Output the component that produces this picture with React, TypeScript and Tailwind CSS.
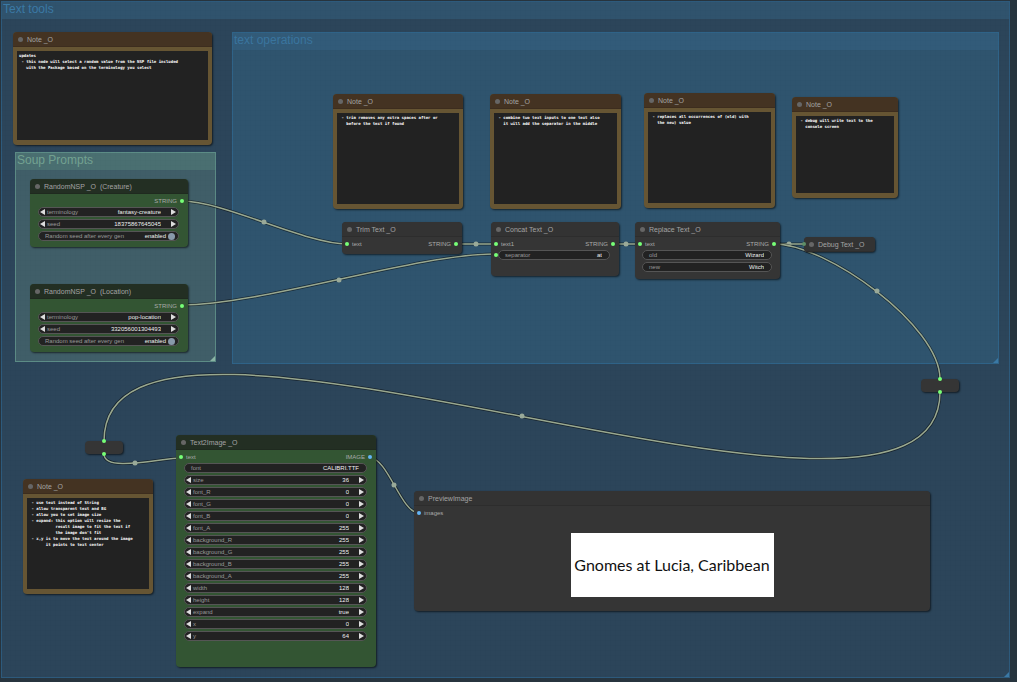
import { useId, useState } from 'react';
import clsx from 'clsx';

const TEXT2IMAGE_FIELDS = [
  { name: 'size', value: '36' },
  { name: 'font_R', value: '0' },
  { name: 'font_G', value: '0' },
  { name: 'font_B', value: '0' },
  { name: 'font_A', value: '255' },
  { name: 'background_R', value: '255' },
  { name: 'background_G', value: '255' },
  { name: 'background_B', value: '255' },
  { name: 'background_A', value: '255' },
  { name: 'width', value: '128' },
  { name: 'height', value: '128' },
  { name: 'expand', value: 'true' },
  { name: 'x', value: '0' },
  { name: 'y', value: '64' },
];

const NOTES = [
  {
    className: 'left-[13px] top-[32px] w-[199px] h-[113px]',
    text: 'updates\n - this node will select a random value from the NSP file included\n   with the Package based on the terminology you select',
  },
  {
    className: 'left-[333px] top-[94px] w-[130px] h-[115px]',
    text: ' - trim removes any extra spaces after or\n   before the text if found',
  },
  {
    className: 'left-[490px] top-[94px] w-[131px] h-[115px]',
    text: ' - combine two text inputs to one text also\n   it will add the separator in the middle',
  },
  {
    className: 'left-[644px] top-[93px] w-[131px] h-[115px]',
    text: ' - replaces all occurrences of (old) with\n   the new) value',
  },
  {
    className: 'left-[792px] top-[97px] w-[106px] h-[101px]',
    text: ' - debug will write text to the\n   console screen',
  },
  {
    className: 'left-[23px] top-[479px] w-[130px] h-[115px]',
    text: " - use text instead of String\n - allow transparent text and BG\n - allow you to set image size\n - expand: this option will resize the\n           result image to fit the text if\n           the image don't fit\n - x,y is to move the text around the image\n       it points to text center",
  },
];

const LINKS = [
  { d: 'M182 201C224 201 305 244 347 244', mid: [264, 222] },
  { d: 'M182 305C261 305 416 254 495 254', mid: [339, 280] },
  { d: 'M456 244L495 244', mid: [476, 244] },
  { d: 'M613 244L640 244', mid: [626, 244] },
  { d: 'M774 244L807 244', mid: [789, 244] },
  { d: 'M774 244C827 244 940 326 940 379', mid: [877, 291] },
  { d: 'M940 392C940 601 104 232 104 441', mid: [522, 416] },
  { d: 'M104 454C104 473 162 458 181 458', mid: [135, 463] },
  { d: 'M370 458C388 458 401 513 419 513', mid: [394, 485] },
];

const Group = ({ title, className, headClass, cornerClass }: any) => (
  <section className={clsx('absolute border', className)}>
    <h2 className={clsx('h-[17px] pl-[1px] text-[12px] leading-[15px]', headClass)}>{title}</h2>
    <span
      className={clsx('absolute right-0 bottom-0 size-[5px] [clip-path:polygon(100%_0,100%_100%,0_100%)]', cornerClass)}
    />
  </section>
);

const Links = () => (
  <svg className="pointer-events-none absolute left-0 top-0" width="1017" height="682" fill="none">
    {LINKS.map((link) => (
      <g key={link.d}>
        <path d={link.d} stroke="#000" strokeOpacity="0.5" strokeWidth="3" />
        <path d={link.d} stroke="#99a88f" strokeWidth="1.5" />
        <circle cx={link.mid[0]} cy={link.mid[1]} r="2.5" fill="#9aaa99" />
      </g>
    ))}
  </svg>
);

const Node = ({ title, className, headClass = 'bg-[#333]', bodyClass = 'bg-[#353535]', children }: any) => (
  <article
    className={clsx(
      'absolute flex flex-col overflow-hidden rounded-[4px] shadow-[1px_1px_2px_rgba(0,0,0,0.6)]',
      bodyClass,
      className
    )}
  >
    <header
      className={clsx('flex h-[15px] shrink-0 items-center gap-[4px] border-b border-black/10 pt-[1px] pl-[5px]', headClass)}
    >
      <span className="size-[5px] rounded-full bg-[#666]" />
      <h3 className="text-[7px] leading-[13px] whitespace-pre text-[#a3a3a3]">{title}</h3>
    </header>
    {children}
  </article>
);

const Dot = ({ blue }: { blue?: boolean }) => (
  <span className={clsx('size-[4px] shrink-0 rounded-full', blue ? 'bg-[#64b5f6]' : 'bg-[#7f7]')} />
);

const Slots = ({ input, output, blueIn, blueOut }: any) => (
  <div className="mt-[2px] mb-[1px] flex h-[10px] shrink-0 items-center gap-[3px] pr-[4px] pl-[3px] text-[6px] leading-[10px] text-[#aaa]">
    {input && <Dot blue={blueIn} />}
    <span>{input}</span>
    <span className="ml-auto">{output}</span>
    {output && <Dot blue={blueOut} />}
  </div>
);

const rowClass =
  'flex h-[10px] shrink-0 items-center rounded-full border border-[#555] bg-[#222] text-[6px] leading-[8px] text-[#999]';
const inputClass = 'h-[8px] w-full min-w-0 flex-1 bg-transparent p-0 text-right leading-[8px] text-[#eee] outline-none';

const Arrow = ({ flip, label }: { flip?: boolean; label: string }) => (
  <button type="button" aria-label={label} className="shrink-0">
    <svg className="block" width="5" height="6" viewBox="0 0 5 6" fill="#ddd">
      <path d={flip ? 'M0 0L5 3L0 6Z' : 'M5 0L0 3L5 6Z'} />
    </svg>
  </button>
);

const StepField = ({ name, value }: { name: string; value: string }) => {
  const id = useId();
  return (
    <div className={clsx(rowClass, 'pr-[2px] pl-[1px]')}>
      <Arrow label={`Previous ${name}`} />
      <label htmlFor={id} className="ml-[2px]">{name}</label>
      <input id={id} defaultValue={value} className={clsx(inputClass, 'mr-[10px]')} />
      <Arrow flip label={`Next ${name}`} />
    </div>
  );
};

const TextField = ({ name, value }: { name: string; value: string }) => {
  const id = useId();
  return (
    <div className={clsx(rowClass, 'pr-[7px] pl-[6px]')}>
      <label htmlFor={id}>{name}</label>
      <input id={id} defaultValue={value} className={inputClass} />
    </div>
  );
};

const ToggleField = ({ name }: { name: string }) => {
  const [on, setOn] = useState(true);
  return (
    <label className={clsx(rowClass, 'pl-[6px] pr-[3px]')}>
      <span>{name}</span>
      <span className="ml-auto mr-[2px] text-[#eee]">{on ? 'enabled' : 'disabled'}</span>
      <input
        type="checkbox"
        checked={on}
        onChange={() => setOn(!on)}
        className="size-[7px] shrink-0 appearance-none rounded-full bg-[#444] checked:bg-[#8899aa]"
      />
    </label>
  );
};

const Note = ({ className, text }: { className: string; text: string }) => (
  <Node title="Note _O" className={className} headClass="bg-[#432]" bodyClass="bg-[#653]">
    <textarea
      aria-label="Note text"
      defaultValue={text}
      spellCheck={false}
      className="mx-[4px] mt-[4px] mb-[5px] block flex-1 resize-none overflow-hidden bg-[#222] px-[2px] py-[2px] font-['DejaVu_Sans_Mono',monospace] text-[4px] leading-[6px] font-bold whitespace-pre text-white outline-none"
    />
  </Node>
);

const RandomNode = ({ title, className, terminology, seed }: any) => (
  <Node title={title} className={className} headClass="bg-[#232f23]" bodyClass="bg-[#353]">
    <Slots output="STRING" />
    <div className="flex flex-col gap-[2px] pr-[9px] pl-[8px]">
      <StepField name="terminology" value={terminology} />
      <StepField name="seed" value={seed} />
      <ToggleField name="Random seed after every gen" />
    </div>
  </Node>
);

const Reroute = ({ className }: { className: string }) => (
  <div
    className={clsx(
      'absolute flex h-[13px] w-[38px] flex-col items-center justify-between rounded-[4px] bg-[#353535] shadow-[1px_1px_2px_rgba(0,0,0,0.6)]',
      className
    )}
  >
    <span className="-mt-[2px] size-[4px] rounded-full bg-[#7f7]" />
    <span className="-mb-[2px] size-[4px] rounded-full bg-[#7f7]" />
  </div>
);

const App = () => (
  <main className="relative min-h-screen w-full overflow-hidden bg-[#27353f] font-['Liberation_Sans',Arial,sans-serif]">
    <Group
      title="Text tools"
      className="left-[1px] top-[1px] h-[677px] w-[1009px] border-[#2d5a7c] bg-[#2c455a]"
      headClass="bg-[#30536d] text-[#3b79a5]"
      cornerClass="bg-[#3b79a5]"
    />
    <Group
      title="text operations"
      className="left-[232px] top-[32px] h-[332px] w-[767px] border-[#2f6388] bg-[#2f546e]"
      headClass="bg-[#325b79] text-[#3a759f]"
      cornerClass="bg-[#3b79a5]"
    />
    <Group
      title="Soup Prompts"
      className="left-[15px] top-[152px] h-[210px] w-[201px] border-[#5c8c86] bg-[#405e68]"
      headClass="bg-[#4a6f71] text-[#73a291]"
      cornerClass="bg-[#8bb5a5]"
    />
    <div className="pointer-events-none absolute inset-0 bg-[linear-gradient(rgba(0,0,0,0.01)_1px,transparent_1px),linear-gradient(90deg,rgba(0,0,0,0.01)_1px,transparent_1px)] bg-[size:5px_5px]" />

    <Links />

    {NOTES.map((note) => (
      <Note key={note.text} {...note} />
    ))}

    <RandomNode
      title="RandomNSP _O  (Creature)"
      className="left-[30px] top-[179px] h-[68px] w-[158px]"
      terminology="fantasy-creature"
      seed="18375867645045"
    />
    <RandomNode
      title="RandomNSP _O  (Location)"
      className="left-[30px] top-[284px] h-[68px] w-[158px]"
      terminology="pop-location"
      seed="332056001304493"
    />

    <Node title="Trim Text _O" className="left-[342px] top-[222px] h-[32px] w-[120px]">
      <Slots input="text" output="STRING" />
    </Node>

    <Node title="Concat Text _O" className="left-[491px] top-[222px] h-[54px] w-[128px]">
      <Slots input="text1" output="STRING" />
      <div className="flex items-center pr-[9px] pl-[3px]">
        <Dot />
        <div className="flex-1">
          <TextField name="separator" value="at" />
        </div>
      </div>
    </Node>

    <Node title="Replace Text _O" className="left-[635px] top-[222px] h-[57px] w-[145px]">
      <Slots input="text" output="STRING" />
      <div className="flex flex-col gap-[2px] pr-[8px] pl-[7px]">
        <TextField name="old" value="Wizard" />
        <TextField name="new" value="Witch" />
      </div>
    </Node>

    <Node title="Debug Text _O" className="left-[804px] top-[237px] h-[15px] w-[71px]" />
    <span className="absolute left-[802px] top-[242px] size-[4px] rounded-full bg-[#5f8f68]" />

    <Reroute className="left-[921px] top-[379px]" />
    <Reroute className="left-[85px] top-[441px]" />

    <Node
      title="Text2Image _O"
      className="left-[176px] top-[435px] h-[232px] w-[200px]"
      headClass="bg-[#232f23]"
      bodyClass="bg-[#353]"
    >
      <Slots input="text" output="IMAGE" blueOut />
      <div className="flex flex-col gap-[2px] pr-[9px] pl-[8px]">
        <TextField name="font" value="CALIBRI.TTF" />
        {TEXT2IMAGE_FIELDS.map((field) => (
          <StepField key={field.name} {...field} />
        ))}
      </div>
    </Node>

    <Node title="PreviewImage" className="left-[414px] top-[491px] h-[120px] w-[516px]">
      <Slots input="images" blueIn />
      <div className="mt-[14px] flex h-[64px] w-[203px] items-center justify-center self-center bg-white font-[Lato,sans-serif] text-[16px] whitespace-nowrap text-[#111]">
        Gnomes at Lucia, Caribbean
      </div>
    </Node>
  </main>
);

export default App;
